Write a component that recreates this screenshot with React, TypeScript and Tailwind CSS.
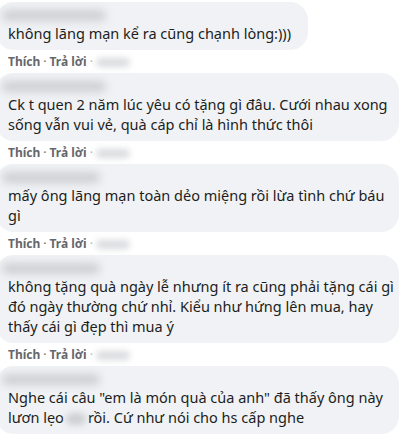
import React from "react";

const font = { fontFamily: '"Noto Sans", "Open Sans", sans-serif' };

function NameBlob({ w = 92 }: { w?: number }) {
  return (
    <div className="h-[15px] flex items-center pl-[0px] ml-[-6px]">
      <div className="h-[11px] rounded-full bg-[#cdcfd3] blur-[4px]" style={{ width: w }} />
    </div>
  );
}

function Actions() {
  return (
    <div className="mt-[4px] mb-[3px] h-[16px] flex items-center pl-[8px] text-[12px] leading-[16px] font-bold text-[#65676b]">
      <span>Thích</span>
      <span className="mx-[3px] font-normal">·</span>
      <span>Trả lời</span>
      <span className="mx-[3px] font-normal text-[#b0b3b8]">·</span>
      <div className="h-[9px] w-[34px] rounded-full bg-[#d9dbde] blur-[3px]" />
    </div>
  );
}

function Bubble({ lines, wide, blob }: { lines: React.ReactNode[]; wide?: boolean; blob?: number }) {
  return (
    <div
      className={`ml-[-4px] rounded-[18px] bg-[#f0f2f5] pt-[6px] pb-[7px] pl-[12px] ${wide ? "w-[403px] pr-[8px]" : "w-fit pr-[17px]"}`}
    >
      <NameBlob w={blob} />
      <div className="text-[14.5px] leading-[20px] text-[#1c1e21] whitespace-nowrap">
        {lines.map((l, i) => (
          <div key={i}>{l}</div>
        ))}
      </div>
    </div>
  );
}

export default function App() {
  return (
    <div className="w-[417px] h-[435px] bg-white overflow-hidden pt-[2px]" style={font}>
      <Bubble lines={["không lãng mạn kể ra cũng chạnh lòng:)))"]} blob={104} />
      <Actions />
      <Bubble
        wide
        blob={104}
        lines={["Ck t quen 2 năm lúc yêu có tặng gì đâu. Cưới nhau xong", "sống vẫn vui vẻ, quà cáp chỉ là hình thức thôi"]}
      />
      <Actions />
      <Bubble wide blob={98} lines={["mấy ông lãng mạn toàn dẻo miệng rồi lừa tình chứ báu", "gì"]} />
      <Actions />
      <Bubble
        wide
        blob={98}
        lines={[
          "không tặng quà ngày lễ nhưng ít ra cũng phải tặng cái gì",
          "đó ngày thường chứ nhỉ. Kiểu như hứng lên mua, hay",
          "thấy cái gì đẹp thì mua ý",
        ]}
      />
      <Actions />
      <Bubble
        wide
        blob={98}
        lines={[
          "Nghe cái câu \"em là món quà của anh\" đã thấy ông này",
          <span>
            lươn lẹo
            <span className="inline-block align-middle mx-[2px] h-[12px] w-[20px] rounded-full bg-[#cdcfd3] blur-[3px]" />
            rồi. Cứ như nói cho hs cấp nghe
          </span>,
        ]}
      />
    </div>
  );
}
